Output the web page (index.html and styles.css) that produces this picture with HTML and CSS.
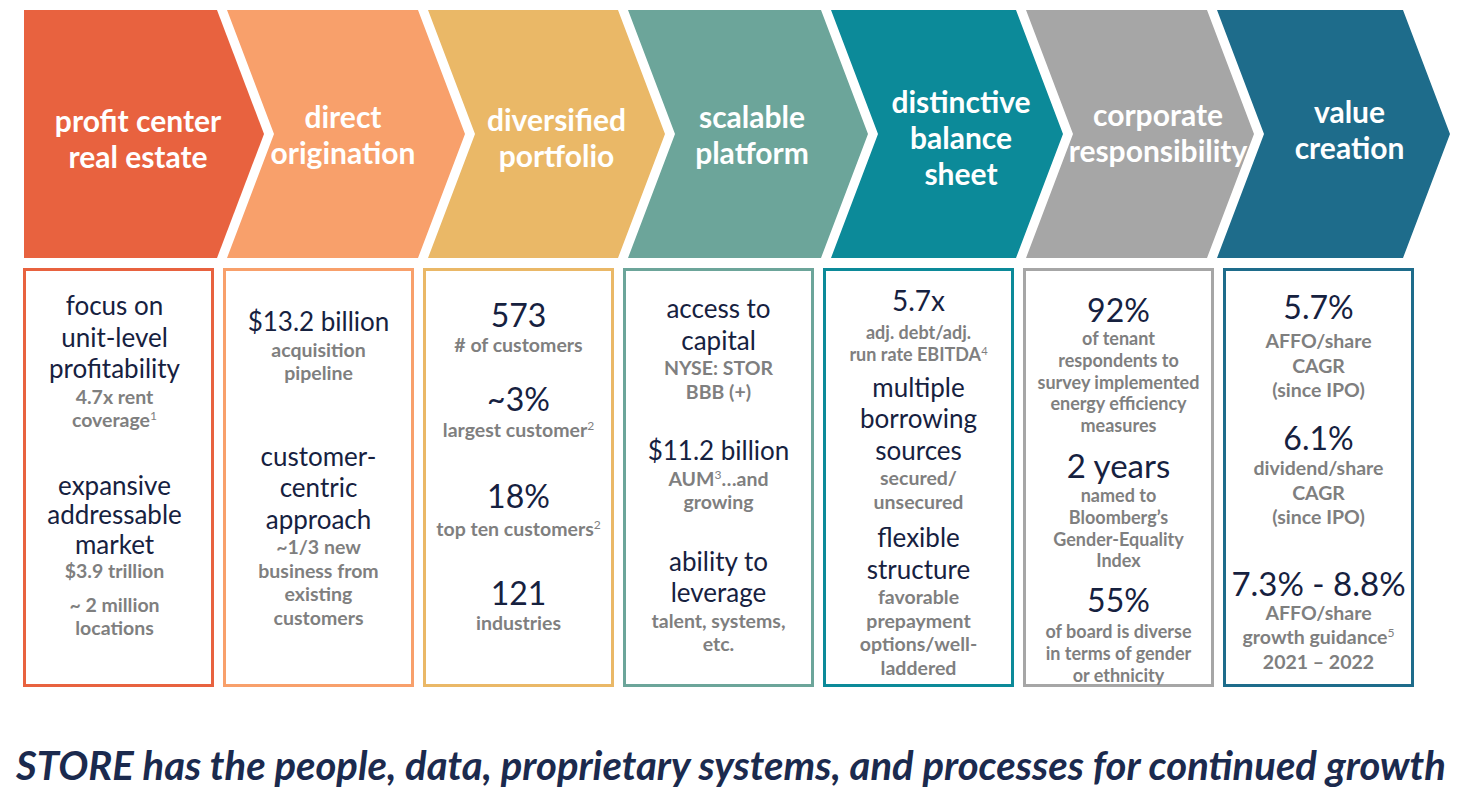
FILE: index.html
```html
<!DOCTYPE html>
<html lang="en">
<head>
<meta charset="utf-8">
<title>STORE growth drivers</title>
<link rel="stylesheet" href="styles.css">
</head>
<body>
<div class="page">
  <div class="chevrons">
    <div class="chev first c1"><span>profit center<br>real estate</span></div>
    <div class="chev c2"><span>direct<br>origination</span></div>
    <div class="chev c3"><span>diversified<br>portfolio</span></div>
    <div class="chev c4"><span>scalable<br>platform</span></div>
    <div class="chev c5"><span>distinctive<br>balance<br>sheet</span></div>
    <div class="chev c6"><span>corporate<br>responsibility</span></div>
    <div class="chev c7"><span>value<br>creation</span></div>
  </div>

  <div class="boxes">
    <div class="box b1">
      <p class="m mt19">focus on<br>unit-level<br>profitability</p>
      <p class="s">4.7x rent<br>coverage<sup>1</sup></p>
      <p class="m mt39 tight">expansive<br>addressable<br>market</p>
      <p class="s">$3.9 trillion</p>
      <p class="s mt10">~ 2 million<br>locations</p>
    </div>
    <div class="box b2">
      <p class="m mt35">$13.2 billion</p>
      <p class="s">acquisition<br>pipeline</p>
      <p class="m mt56">customer-<br>centric<br>approach</p>
      <p class="s">~1/3 new<br>business from<br>existing<br>customers</p>
    </div>
    <div class="box b3">
      <p class="n mt26">573</p>
      <p class="s">#&nbsp;of customers</p>
      <p class="n mt24">~3%</p>
      <p class="s mt1">largest customer<sup>2</sup></p>
      <p class="n mt37">18%</p>
      <p class="s mt3">top ten customers<sup>2</sup></p>
      <p class="n mt34">121</p>
      <p class="s">industries</p>
    </div>
    <div class="box b4">
      <p class="m mt22">access to<br>capital</p>
      <p class="s">NYSE: STOR<br>BBB (+)</p>
      <p class="m mt32">$11.2 billion</p>
      <p class="s">AUM<sup>3</sup>…and<br>growing</p>
      <p class="m mt32">ability to<br>leverage</p>
      <p class="s">talent, systems,<br>etc.</p>
    </div>
    <div class="box b5">
      <p class="n sm mt12">5.7x</p>
      <p class="s2 mt5">adj. debt/adj.<br>run rate EBITDA<sup>4</sup></p>
      <p class="m mt6">multiple<br>borrowing<br>sources</p>
      <p class="s">secured/<br>unsecured</p>
      <p class="m mt9">flexible<br>structure</p>
      <p class="s">favorable<br>prepayment<br>options/well-<br>laddered</p>
    </div>
    <div class="box b6">
      <p class="n mt21">92%</p>
      <p class="s2">of tenant<br>respondents to<br>survey implemented<br>energy efficiency<br>measures</p>
      <p class="n xl mt10">2 years</p>
      <p class="s2 mt2">named to<br>Bloomberg’s<br>Gender-Equality<br>Index</p>
      <p class="n mt10">55%</p>
      <p class="s2 mt3">of board is diverse<br>in terms of gender<br>or ethnicity</p>
    </div>
    <div class="box b7">
      <p class="n mt18">5.7%</p>
      <p class="s loose mt4">AFFO/share<br>CAGR<br>(since IPO)</p>
      <p class="n mt17">6.1%</p>
      <p class="s loose">dividend/share<br>CAGR<br>(since IPO)</p>
      <p class="n xl mt35">7.3% - 8.8%</p>
      <p class="s loose">AFFO/share<br>growth guidance<sup>5</sup><br>2021 – 2022</p>
    </div>
  </div>

  <p class="footer">STORE has the people, data, proprietary systems, and processes for continued growth</p>
</div>
</body>
</html>
```

FILE: styles.css
```css
* { box-sizing: border-box; }

html, body {
  margin: 0;
  padding: 0;
  background: #ffffff;
}

body {
  font-family: Lato, "Open Sans", "Liberation Sans", sans-serif;
  width: 1462px;
  height: 796px;
  overflow: hidden;
}

.page {
  padding-top: 10px;
}

/* ---------- chevrons ---------- */
.chevrons {
  display: flex;
  padding-left: 24px;
  height: 248px;
}

.chev {
  --w: 190px;
  flex: 0 0 auto;
  width: calc(var(--w) + 47px);
  height: 248px;
  margin-right: -37px;
  display: flex;
  align-items: center;
  justify-content: center;
  color: #ffffff;
  font-weight: 700;
  font-size: 30px;
  line-height: 36px;
  text-align: center;
  white-space: nowrap;
  clip-path: polygon(0 0, var(--w) 0, 100% 50%, var(--w) 100%, 0 100%, 47px 50%);
}

.chev.first {
  clip-path: polygon(0 0, var(--w) 0, 100% 50%, var(--w) 100%, 0 100%);
}

.c1 { --w: 193px; background: #e8623f; padding: 8px 12px 0 0; }
.c2 { --w: 191px; background: #f8a06b; padding: 0 26px 0 20px; }
.c3 { --w: 190px; background: #eab867; padding: 6px 0 0 20px; }
.c4 { --w: 193px; background: #6ca59a; padding: 0 12px 0 20px; }
.c5 { --w: 185px; background: #0c8a99; padding: 6px 0 0 28px; }
.c6 { --w: 181px; background: #a6a6a6; padding: 0 0 4px 36px; }
.c7 { --w: 186px; background: #1e6c8b; padding: 0 0 10px 32px; }

/* ---------- boxes ---------- */
.boxes {
  display: flex;
  gap: 9px;
  padding-left: 23px;
  margin-top: 10px;
}

.box {
  width: 191px;
  height: 419px;
  border: 3px solid;
  text-align: center;
  white-space: nowrap;
  display: flex;
  flex-direction: column;
  align-items: center;
}

.b1 { border-color: #e8623f; padding-right: 8px; }
.b2 { border-color: #f8a06b; }
.b3 { border-color: #eab867; }
.b4 { border-color: #6ca59a; }
.b5 { border-color: #0c8a99; }
.b6 { border-color: #a6a6a6; }
.b7 { border-color: #1e6c8b; }

.box p { margin: 0; }

.m {
  color: #16213f;
  font-size: 26px;
  line-height: 31.5px;
  font-weight: 400;
}

.m.tight { line-height: 29.5px; }

.n {
  color: #16213f;
  font-size: 32px;
  line-height: 36px;
  font-weight: 400;
}

.n.sm { font-size: 28px; line-height: 34px; }
.n.xl { font-size: 33px; line-height: 36px; }

.s {
  color: #7f7f7f;
  font-size: 19.5px;
  line-height: 23.6px;
  font-weight: 700;
}

.s.loose { line-height: 24.5px; }

.s2 {
  color: #7f7f7f;
  font-size: 18px;
  line-height: 21.8px;
  font-weight: 700;
}

sup {
  font-size: 0.62em;
  line-height: 0;
  vertical-align: 0.55em;
  font-weight: 400;
}

.mt1 { margin-top: 1px !important; }
.mt2 { margin-top: 2px !important; }
.mt3 { margin-top: 3px !important; }
.mt4 { margin-top: 4px !important; }
.mt5 { margin-top: 5px !important; }
.mt6 { margin-top: 6px !important; }
.mt9 { margin-top: 9px !important; }
.mt10 { margin-top: 10px !important; }
.mt12 { margin-top: 12px !important; }
.mt17 { margin-top: 17.5px !important; }
.mt18 { margin-top: 18px !important; }
.mt19 { margin-top: 19px !important; }
.mt21 { margin-top: 21px !important; }
.mt22 { margin-top: 22px !important; }
.mt24 { margin-top: 24px !important; }
.mt26 { margin-top: 26px !important; }
.mt32 { margin-top: 32px !important; }
.mt34 { margin-top: 34px !important; }
.mt35 { margin-top: 35px !important; }
.mt37 { margin-top: 37px !important; }
.mt39 { margin-top: 39px !important; }
.mt56 { margin-top: 56px !important; }

/* ---------- footer ---------- */
.footer {
  margin: 55px 0 0;
  text-align: center;
  color: #1b2a4e;
  font-size: 40px;
  line-height: 46px;
  font-weight: 700;
  font-style: italic;
  white-space: nowrap;
}
```
